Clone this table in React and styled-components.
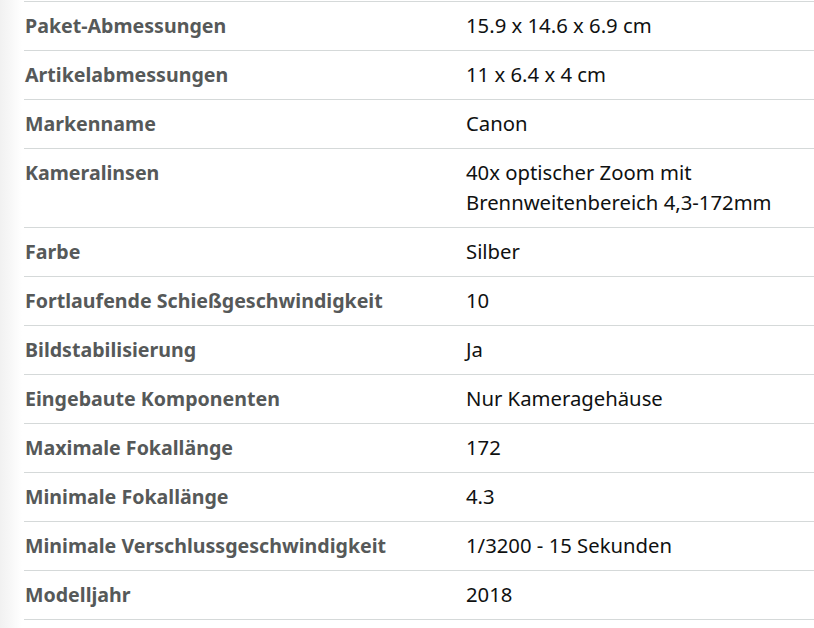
import React from "react";
import styled, { createGlobalStyle } from "styled-components";

const Global = createGlobalStyle`
  html, body { margin: 0; padding: 0; background: #fff; }
  body { font-family: "Noto Sans", "Open Sans", sans-serif; }
`;

const Page = styled.div`
  width: 814px;
  height: 628px;
  overflow: hidden;
  padding-left: 24px;
  box-sizing: border-box;
  background: linear-gradient(to right, #f1f1f1 0px, #f7f7f7 10px, #ffffff 22px);
`;

const Table = styled.div`
  background: #fff;
  padding-top: 1px;
`;

const Row = styled.div`
  display: grid;
  grid-template-columns: 442px 1fr;
  align-items: start;
  border-top: 1px solid #d5d9d9;
  padding: 9px 0;
  &:last-child { border-bottom: 1px solid #d5d9d9; }
`;

const Label = styled.div`
  font-size: 19.6px;
  line-height: 30px;
  font-weight: 700;
  color: #565959;
  padding-left: 1px;
`;

const Value = styled.div`
  font-size: 20.3px;
  line-height: 30px;
  color: #0f1111;
  margin-top: -1px;
  padding: 0 20px 1px 0;
`;

const rows = [
  ["Paket-Abmessungen", "15.9 x 14.6 x 6.9 cm"],
  ["Artikelabmessungen", "11 x 6.4 x 4 cm"],
  ["Markenname", "Canon"],
  ["Kameralinsen", "40x optischer Zoom mit Brennweitenbereich 4,3-172mm"],
  ["Farbe", "Silber"],
  ["Fortlaufende Schießgeschwindigkeit", "10"],
  ["Bildstabilisierung", "Ja"],
  ["Eingebaute Komponenten", "Nur Kameragehäuse"],
  ["Maximale Fokallänge", "172"],
  ["Minimale Fokallänge", "4.3"],
  ["Minimale Verschlussgeschwindigkeit", "1/3200 - 15 Sekunden"],
  ["Modelljahr", "2018"],
];

export default function App() {
  return (
    <>
      <Global />
      <Page>
        <Table>
          {rows.map(([k, v]) => (
            <Row key={k}>
              <Label>{k}</Label>
              <Value>{v}</Value>
            </Row>
          ))}
        </Table>
      </Page>
    </>
  );
}
